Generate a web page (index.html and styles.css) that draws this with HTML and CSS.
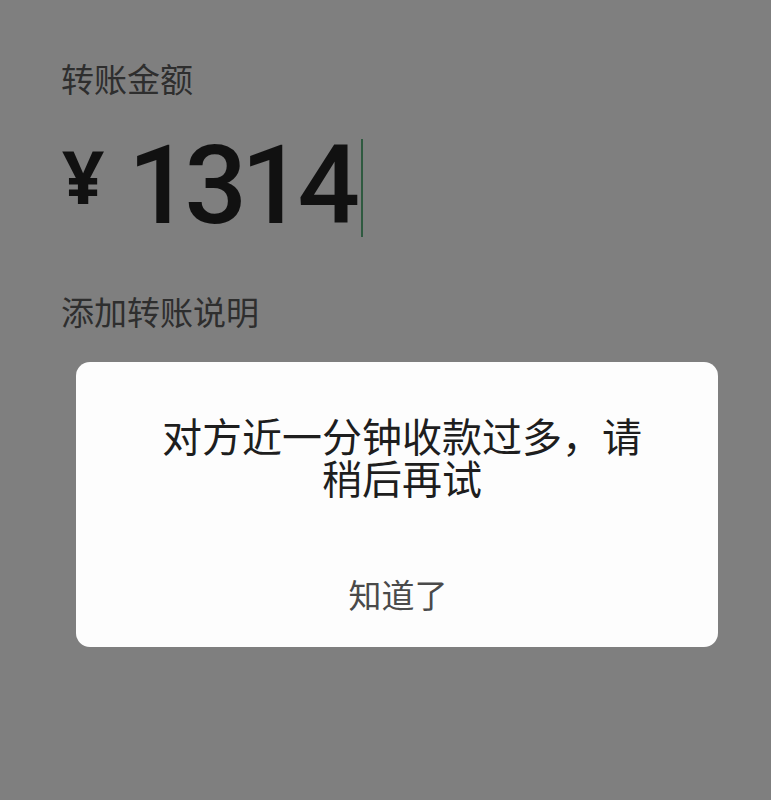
FILE: index.html
```html
<!DOCTYPE html>
<html lang="zh-CN">
<head>
<meta charset="utf-8">
<title>转账</title>
<link rel="stylesheet" href="styles.css">
</head>
<body>
<div class="page">
  <div class="label">转账金额</div>
  <div class="amount-row">
    <span class="yen">¥</span>
    <span class="amount">1314</span>
    <span class="cursor"></span>
  </div>
  <div class="note">添加转账说明</div>
</div>
<div class="dialog">
  <div class="message">对方近一分钟收款过多，请稍后再试</div>
  <div class="action">知道了</div>
</div>
</body>
</html>
```
FILE: styles.css
```css
html, body {
  margin: 0;
  padding: 0;
  background: #7f7f7f;
  width: 771px;
  height: 800px;
  overflow: hidden;
  font-family: "Noto Sans CJK SC", "Noto Sans", sans-serif;
}
.page {
  padding: 56px 0 0 61px;
}
.label {
  font-size: 33px;
  line-height: 44px;
  color: #2e2e2e;
}
.amount-row {
  display: flex;
  align-items: flex-start;
  margin-top: 31px;
  height: 110px;
}
.yen {
  font-family: "Noto Sans", sans-serif;
  font-size: 74px;
  line-height: 74px;
  font-weight: 700;
  color: #111;
  margin-top: 8px;
  margin-left: 1px;
  width: 66px;
}
.amount {
  font-family: Roboto, "Noto Sans", sans-serif;
  font-weight: 500;
  font-size: 110px;
  line-height: 110px;
  color: #111;
  letter-spacing: -6px;
}
.cursor {
  width: 2px;
  height: 98px;
  background: #2f5a40;
  margin-left: 7px;
  margin-top: 8px;
}
.note {
  margin-top: 48px;
  font-size: 33px;
  line-height: 44px;
  color: #2e2e2e;
}
.dialog {
  position: absolute;
  left: 76px;
  top: 362px;
  width: 642px;
  height: 285px;
  background: #fdfdfd;
  border-radius: 14px;
  box-sizing: border-box;
  padding: 52px 70px 0;
  display: flex;
  flex-direction: column;
  align-items: center;
}
.message {
  font-size: 40px;
  line-height: 42px;
  color: #1e1e1e;
  text-align: center;
  margin-left: 10px;
}
.action {
  margin-top: 74px;
  font-size: 33px;
  line-height: 44px;
  color: #4a4a4a;
  margin-left: 2px;
}
```
